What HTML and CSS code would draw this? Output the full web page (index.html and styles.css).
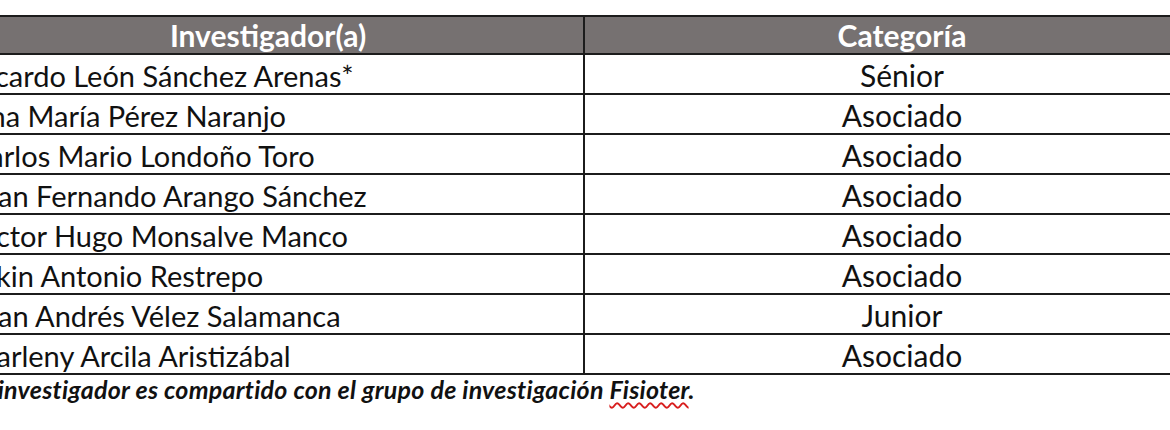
FILE: index.html
```html
<!DOCTYPE html>
<html lang="es">
<head>
<meta charset="utf-8">
<title>Investigadores</title>
<link rel="stylesheet" href="styles.css">
</head>
<body>
<div class="page">
  <table class="grid">
    <thead>
      <tr>
        <th class="col-name">Investigador(a)</th>
        <th class="col-cat">Categoría</th>
      </tr>
    </thead>
    <tbody>
      <tr><td class="name">Ricardo León Sánchez Arenas*</td><td class="cat">Sénior</td></tr>
      <tr><td class="name">Ana María Pérez Naranjo</td><td class="cat">Asociado</td></tr>
      <tr><td class="name">Carlos Mario Londoño Toro</td><td class="cat">Asociado</td></tr>
      <tr><td class="name">Juan Fernando Arango Sánchez</td><td class="cat">Asociado</td></tr>
      <tr><td class="name">Víctor Hugo Monsalve Manco</td><td class="cat">Asociado</td></tr>
      <tr><td class="name">Jakin Antonio Restrepo</td><td class="cat">Asociado</td></tr>
      <tr><td class="name">Juan Andrés Vélez Salamanca</td><td class="cat">Junior</td></tr>
      <tr><td class="name">Marleny Arcila Aristizábal</td><td class="cat">Asociado</td></tr>
    </tbody>
  </table>
  <p class="note">*El investigador es compartido con el grupo de investigación <span class="spell">Fisioter</span>.</p>
</div>
</body>
</html>
```

FILE: styles.css
```css
html, body {
  margin: 0;
  padding: 0;
  background: #ffffff;
  overflow: hidden;
}

body {
  width: 1170px;
  height: 430px;
  font-family: Lato, "Open Sans", "Liberation Sans", sans-serif;
  color: #111111;
}

.page {
  padding-top: 15px;
  margin-left: -49px;
  width: 1300px;
}

.grid {
  border-collapse: collapse;
  table-layout: fixed;
  width: 1270px;
}

.grid th,
.grid td {
  border: 2px solid #1c1c1c;
  padding: 0;
}

.grid th {
  background: #767171;
  color: #ffffff;
  font-weight: 700;
  font-size: 30px;
  height: 38px;
  line-height: 36px;
  text-align: center;
  box-sizing: border-box;
}

.col-name {
  width: 632px;
}

.col-cat {
  width: 636px;
}

.grid td {
  height: 38px;
  line-height: 35px;
  font-size: 29px;
  padding-top: 3px;
  box-sizing: border-box;
}

.grid td.name {
  text-align: left;
  padding-left: 17px;
  white-space: nowrap;
}

.grid td.cat {
  text-align: center;
  font-size: 30px;
}

.note {
  margin: 0;
  padding-left: 11px;
  font-size: 25px;
  letter-spacing: 0.25px;
  font-weight: 700;
  font-style: italic;
  line-height: 28px;
}

.spell {
  text-decoration: underline wavy #d81e1e;
  text-decoration-thickness: 1.5px;
  text-underline-offset: 3px;
}
```
